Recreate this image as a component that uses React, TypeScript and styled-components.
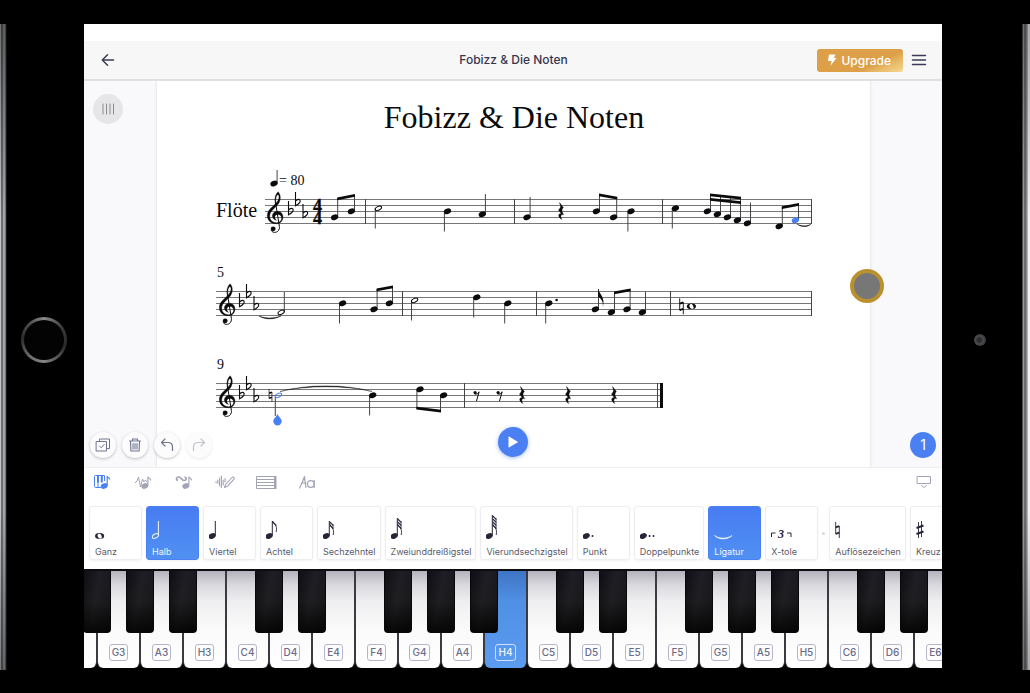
import React from 'react';
import styled, { createGlobalStyle, css } from 'styled-components';

const INK = '#0b0b0d';
const BLUE = '#4b80f3';
const SANS = "Inter, 'Liberation Sans', sans-serif";
const SERIF = "'Liberation Serif', 'Times New Roman', serif";

const GlobalStyle = createGlobalStyle`
  * { box-sizing: border-box; }
  html, body { margin: 0; padding: 0; background: #000; }
  body { font-family: ${SANS}; color: #3b3b55; }
  button { font-family: inherit; margin: 0; padding: 0; border: 0; background: none; color: inherit; cursor: pointer; }
  svg { display: block; }
`;

/* ---------- device frame ---------- */

const Device = styled.div`
  display: grid;
  grid-template-columns: 84px minmax(0, 1fr) 88px;
  min-height: 100vh;
  padding: 24px 0 23px;
  background: #000;
`;

const Bezel = styled.div<{ $side: 'left' | 'right' }>`
  display: flex;
  align-items: center;
  justify-content: center;
  background-repeat: no-repeat;
  ${(p) =>
    p.$side === 'left'
      ? css`
          padding: 0 0 14px 4px;
          background-image:
            linear-gradient(rgba(0, 0, 0, 0.45), rgba(0, 0, 0, 0) 30%, rgba(0, 0, 0, 0) 75%, rgba(0, 0, 0, 0.4)),
            linear-gradient(to right, #c4c7c8 0 1px, #6a6e71 1px 3px, #a3a7aa 3px 5px, #6f7276 5px 6px, #1c1d1f 6px 7px);
          background-size: 7px 100%;
          background-position: left top;
        `
      : css`
          padding: 0 12px 14px 0;
          background-image:
            linear-gradient(rgba(0, 0, 0, 0.3), rgba(0, 0, 0, 0) 30%, rgba(0, 0, 0, 0) 75%, rgba(0, 0, 0, 0.3)),
            linear-gradient(to right, #4a4a4e 0 1px, #9a9a9e 1px 2px, #6b6b6f 2px 4px, #85858a 4px 5px, #b5b5b9 5px 6px, #f0f0f2 6px 8px);
          background-size: 8px 100%;
          background-position: right top;
        `}
`;

const HomeButton = styled.button`
  width: 46px;
  height: 46px;
  flex: none;
  border-radius: 50%;
  border: 3px solid transparent;
  background:
    linear-gradient(#030303, #030303) padding-box,
    conic-gradient(#8a8a8a, #3a3a3a 15%, #2a2a2a 30%, #858585 50%, #6a6a6a 62%, #2c2c2c 76%, #4a4a4a 88%, #8a8a8a) border-box;
`;

const Camera = styled.div`
  width: 12px;
  height: 12px;
  border-radius: 50%;
  background: radial-gradient(circle at 45% 50%, #2c2c2e 0 20%, #4b4b4d 45%, #37373a 70%, #1a1a1c 100%);
`;

const Screen = styled.main`
  display: flex;
  flex-direction: column;
  min-width: 0;
  margin-bottom: 2px;
  overflow: hidden;
  background: #fff;
`;

/* ---------- header ---------- */

const Header = styled.header`
  display: grid;
  grid-template-columns: 1fr auto 1fr;
  align-items: center;
  height: 57px;
  padding: 17px 15px 0 16px;
  background: linear-gradient(#fff 0 17px, #f7f7f8 17px);
  border-bottom: 2px solid #e0e0e2;
`;

const HeaderTitle = styled.div`
  font-size: 12px;
  font-weight: 500;
  line-height: 16px;
  color: #36364f;
`;

const IconButton = styled.button`
  display: flex;
  width: 16px;
  height: 16px;
  color: #3b3b55;
`;

const HeaderActions = styled.div`
  display: flex;
  align-items: center;
  justify-content: flex-end;
  gap: 8px;
`;

const Upgrade = styled.button`
  display: flex;
  align-items: center;
  justify-content: center;
  gap: 4px;
  height: 23px;
  padding: 0 12px 0 10px;
  border-radius: 3px;
  background: linear-gradient(155deg, #dd9f48 0 66%, #e7b865 78%, #f5d892 100%);
  color: #fff;
  font-size: 12px;
  font-weight: 500;
`;

/* ---------- workspace ---------- */

const Workspace = styled.section`
  position: relative;
  flex: 1 0 auto;
  display: grid;
  grid-template-columns: 73px minmax(0, 1fr) 72px;
  background: #f9f9fb;
`;

const Gutter = styled.div`
  padding: 13px 9px;
`;

const GripButton = styled.button`
  display: flex;
  align-items: center;
  justify-content: center;
  width: 30px;
  height: 30px;
  border-radius: 50%;
  background: #e6e6e8;
  color: #8c8c90;
`;

const Sheet = styled.article`
  padding: 16px 58px 30px 59px;
  background: #fff;
  box-shadow: 0 0 3px rgba(60, 60, 90, 0.18);
  clip-path: inset(0 -4px);
`;

const SheetTitle = styled.h1`
  margin: 0 0 24px;
  font-family: ${SERIF};
  font-size: 32px;
  font-weight: 400;
  line-height: 40px;
  text-align: center;
  color: ${INK};
`;

const StaffSvg = styled.svg`
  width: 100%;
  height: auto;
  overflow: visible;
  font-family: ${SERIF};
  fill: ${INK};
`;

const FloatingBar = styled.div`
  position: absolute;
  left: 0;
  right: 0;
  bottom: 9px;
  display: grid;
  grid-template-columns: 1fr auto 1fr;
  align-items: end;
  padding: 0 6px;
`;

const RoundGroup = styled.div`
  display: flex;
  gap: 6px;
`;

const RoundButton = styled.button<{ $faded?: boolean }>`
  display: flex;
  align-items: center;
  justify-content: center;
  width: 26px;
  height: 26px;
  border-radius: 50%;
  background: #fcfcfd;
  color: ${(p) => (p.$faded ? '#c0c2ce' : '#6f7590')};
  box-shadow: 0 1px 3px rgba(40, 40, 70, ${(p) => (p.$faded ? 0.1 : 0.28)});
`;

const PlayButton = styled.button`
  display: flex;
  align-items: center;
  justify-content: center;
  width: 30px;
  height: 30px;
  margin-bottom: 1px;
  border-radius: 50%;
  background: ${BLUE};
  color: #fff;
  box-shadow: 0 1px 4px rgba(75, 128, 243, 0.5);
`;

const VoiceButton = styled.button`
  justify-self: end;
  width: 26px;
  height: 26px;
  border-radius: 50%;
  background: ${BLUE};
  color: #fff;
  font-size: 14px;
  line-height: 26px;
`;

const TouchPoint = styled.div`
  position: absolute;
  top: 188px;
  right: 58px;
  width: 34px;
  height: 34px;
  border-radius: 50%;
  border: 4px solid #b9922f;
  background: #777;
`;

/* ---------- tool panel ---------- */

const Panel = styled.section`
  display: flex;
  flex-direction: column;
  background: #fff;
  border-top: 1px solid #efeff1;
`;

const TabRow = styled.nav`
  display: flex;
  align-items: center;
  gap: 17px;
  height: 31px;
  padding: 0 6px 3px;
`;

const Tab = styled.button<{ $active?: boolean; $end?: boolean }>`
  display: flex;
  justify-content: center;
  width: 24px;
  height: 16px;
  margin-left: ${(p) => (p.$end ? 'auto' : '0')};
  color: ${(p) => (p.$active ? BLUE : '#a3a3b6')};
`;

const CardRow = styled.div`
  display: flex;
  align-items: center;
  gap: 4px;
  padding: 7px 0 9px 5px;
  overflow: hidden;
`;

const Card = styled.button<{ $active?: boolean }>`
  display: flex;
  flex: none;
  flex-direction: column;
  justify-content: flex-end;
  align-items: flex-start;
  gap: 4px;
  min-width: 53px;
  height: 54px;
  padding: 0 4px 1px 5px;
  border-radius: 3px;
  border: 1px solid ${(p) => (p.$active ? BLUE : '#ededf0')};
  background: ${(p) => (p.$active ? 'linear-gradient(#487cf3, #5090f2)' : '#fff')};
  color: ${(p) => (p.$active ? '#f2f6ff' : '#26263a')};
  box-shadow: 0 1px 2px rgba(50, 50, 80, 0.06);
`;

const CardLabel = styled.span<{ $active?: boolean }>`
  font-size: 9px;
  line-height: 12px;
  white-space: nowrap;
  color: ${(p) => (p.$active ? '#f2f6ff' : '#5a5a6b')};
`;

const Separator = styled.span`
  flex: none;
  width: 3px;
  height: 3px;
  border-radius: 50%;
  background: #d3dcdc;
`;

/* ---------- keyboard ---------- */

const Keyboard = styled.section`
  display: flex;
  height: 99px;
  border-top: 2px solid #0c0c12;
  overflow: hidden;
  background: #050507;
`;

const WhiteKey = styled.button<{ $down?: boolean; $partial?: boolean }>`
  position: relative;
  display: flex;
  flex: none;
  align-items: flex-end;
  justify-content: center;
  width: ${(p) => (p.$partial ? '13px' : '43px')};
  padding-bottom: 7px;
  border: solid #3a3a40;
  border-width: 0 1px 0 ${(p) => (p.$partial ? '0' : '1px')};
  border-radius: 0 0 6px ${(p) => (p.$partial ? '0' : '6px')};
  background: ${(p) =>
    p.$down
      ? 'linear-gradient(#3f74c4, #4f8fe4 30%, #5b9cf0)'
      : 'linear-gradient(#b3b1bb, #d9d8de 14%, #efeff1 32%, #fafafa 60%, #fff)'};
`;

const BlackKey = styled.span`
  position: absolute;
  z-index: 1;
  top: 0;
  right: -15px;
  width: 28px;
  height: 62px;
  border-radius: 0 0 4px 4px;
  border: solid #08080a;
  border-width: 0 1px 1px;
  background: linear-gradient(100deg, rgba(0, 0, 0, 0.5), transparent 45%, rgba(0, 0, 0, 0.3)), linear-gradient(#1f1d26, #1f1f22 50%, #070707);
`;

const KeyName = styled.span<{ $down?: boolean }>`
  min-width: 18px;
  height: 17px;
  padding: 0 2px;
  border: 1px solid ${(p) => (p.$down ? '#cfe0fb' : '#b4b6cb')};
  border-radius: 3px;
  font-size: 10px;
  font-weight: 500;
  line-height: 15px;
  text-align: center;
  color: ${(p) => (p.$down ? '#f4f8ff' : '#6a6c88')};
`;

/* ---------- notation glyphs ---------- */

type Pt = [number, number];

const Head = ({ x, y, c }: { x: number; y: number; c?: string }) => (
  <ellipse cx={x} cy={y} rx="3.8" ry="2.7" transform={`rotate(-24 ${x} ${y})`} fill={c} />
);

const HalfHead = ({ x, y, c = INK }: { x: number; y: number; c?: string }) => (
  <ellipse cx={x} cy={y} rx="3.4" ry="1.9" transform={`rotate(-26 ${x} ${y})`} fill="none" stroke={c} strokeWidth="1" />
);

const WholeHead = ({ x, y }: { x: number; y: number }) => (
  <path
    fillRule="evenodd"
    fill="currentColor"
    d={`M${x - 4.6} ${y}a4.6 2.9 0 1 0 9.2 0a4.6 2.9 0 1 0 -9.2 0zM${x - 2} ${y - 1}c.6 -1.7 2.6 -1.6 3.5 .1c.8 1.5 1 2.7 .4 3.200c-.9 .7 -2.600 .2 -3.400 -1c-.5 -.8 -.7 -1.700 -.5 -2.300z`}
  />
);

const Stem = ({ x, from, to, c = '#444' }: { x: number; from: number; to: number; c?: string }) => (
  <path d={`M${x} ${from}V${to}`} stroke={c} strokeWidth="1" />
);

/* A note with its stem; y counts pixels below the top line of the staff. */
const Note = ({ x, y, to, half, c }: { x: number; y: number; to: number; half?: boolean; c?: string }) => {
  const sx = to < y ? x + 3.1 : x - 3.1;
  return (
    <g>
      <Stem x={sx} from={y} to={to} />
      {half ? <HalfHead x={x} y={y} c={c} /> : <Head x={x} y={y} c={c} />}
    </g>
  );
};

const Beam = ({ a, b }: { a: Pt; b: Pt }) => (
  <path d={`M${a[0] - 0.5} ${a[1]}L${b[0] + 0.5} ${b[1]}v2.8L${a[0] - 0.5} ${a[1] + 2.8}z`} />
);

const Clef = ({ x }: { x: number }) => (
  <g transform={`translate(${x} 0)`}>
    <path d="M8.3 5C7.2 0 8.2 -5 11.2 -7.3C13 -5.2 13.7 -2.4 13.2 .6C12.4 5 9.4 7.4 6.8 9.8C4 12.4 2.6 14.8 2.7 17.6C2.9 21.4 6 23.8 9.8 23.7C12.8 23.5 14.7 21.6 14.6 19C14.4 16.6 12.6 15.2 10.6 15.4C8.6 15.6 7.6 17 7.8 18.6C8 19.8 8.6 20.6 9.6 21.4C7 20.8 5.2 19 5.3 16.8C5.5 14 7.8 12.2 10.4 12.2C13.8 12.2 16.2 15 16 18.4C15.8 22 13.2 24.6 9.4 24.7C4 24.8 .2 21.2 .3 16.4C.4 11.4 4.6 8.6 7.4 5.8C10.2 3 12.2 .6 12 -2.4C11.9 -3.8 11.3 -4.6 10.7 -4.3C8.8 -3 8.4 1 9.2 5z" stroke={INK} strokeWidth=".3" />
    <path d="M8.6 4L12.4 27.5C12.8 31 10.5 33.4 7.5 33.4C5.6 33.4 4.4 32.2 4.2 30.6" fill="none" stroke={INK} strokeWidth="1" />
    <circle cx="6.2" cy="29.8" r="2.4" />
  </g>
);

const Flat = ({ x, y }: { x: number; y: number }) => (
  <path
    d={`M${x} ${y - 10}V${y + 3.8}C${x + 2.6} ${y + 2.4} ${x + 4.9} ${y + 0.8} ${x + 4.7} ${y - 1.2}C${x + 4.4} ${y - 3.2} ${x + 1.8} ${y - 3} ${x} ${y - 0.9}`}
    fill="none"
    stroke={INK}
    strokeWidth="1.1"
  />
);

const KeySignature = ({ x }: { x: number }) => (
  <>
    <Flat x={x} y={12} />
    <Flat x={x + 7} y={3} />
    <Flat x={x + 14.5} y={15} />
  </>
);

const Natural = ({ x, y, s = 1 }: { x: number; y: number; s?: number }) => (
  <g transform={`translate(${x} ${y}) scale(${s})`} fill="none" stroke="currentColor">
    <path d="M-1.8 -8V4M1.8 -4V8" strokeWidth=".9" />
    <path d="M-1.8 -2.6L1.8 -3.8M-1.8 3.8L1.8 2.6" strokeWidth="1.9" />
  </g>
);

const QuarterRest = ({ x }: { x: number }) => (
  <path d={`M${x - 1.4} 3.6L${x + 2.4} 8.6C${x + 0.4} 10.8 ${x + 0.6} 12.6 ${x + 2.8} 15.8C${x + 0.2} 15 ${x - 1} 17 ${x + 0.8} 20.6C${x - 3} 18.4 ${x - 3.4} 14.4 ${x + 0.2} 14.6L${x - 2.6} 11C${x} 8.8 ${x} 6.8 ${x - 1.6} 4z`} stroke={INK} strokeWidth=".3" />
);

const EighthRest = ({ x }: { x: number }) => (
  <g>
    <circle cx={x - 1.4} cy="9.6" r="1.6" />
    <path d={`M${x - 2.4} 10.6C${x} 11.8 ${x + 1.6} 10.8 ${x + 2.6} 8.8L${x} 18`} fill="none" stroke={INK} strokeWidth="1" />
  </g>
);

const Flag = ({ x, y }: { x: number; y: number }) => (
  <path d={`M${x - 0.4} ${y}C${x + 0.8} ${y + 5} ${x + 7} ${y + 8} ${x + 4.4} ${y + 18}C${x + 5} ${y + 11} ${x + 1.4} ${y + 9} ${x - 0.4} ${y + 7.4}z`} fill="currentColor" />
);

const Bars = ({ at }: { at: number[] }) => (
  <>
    {at.map((x) => (
      <path key={x} d={`M${x} 0V25`} stroke="#444" strokeWidth="1" />
    ))}
  </>
);

const Staff = ({ label, start = 0, end = 596, children }: { label: string; start?: number; end?: number; children: React.ReactNode }) => (
  <StaffSvg viewBox="0 0 596 92" role="img" aria-label={label}>
    <g transform="translate(0 38)" color={INK}>
      {[0, 6, 12, 18, 24].map((y) => (
        <path key={y} d={`M${start} ${y + 0.5}H${end}`} stroke="#77777a" strokeWidth="1" />
      ))}
      {children}
    </g>
  </StaffSvg>
);

const SystemOne = () => (
  <Staff label="Flöte, Takte 1 bis 4" start={49}>
    <text x="0" y="18" fontSize="20">Flöte</text>
    <Note x={58} y={-15.5} to={-29} />
    <text x="63" y="-14" fontSize="14">= 80</text>
    <Clef x={51} />
    <KeySignature x={72.5} />
    <text x="97" y="12.5" fontSize="18" fontWeight="700" stroke={INK} strokeWidth=".4">4</text>
    <text x="97" y="24.5" fontSize="18" fontWeight="700" stroke={INK} strokeWidth=".4">4</text>
    <Note x={118.6} y={18.3} to={-1} />
    <Note x={135.4} y={12.3} to={-4} />
    <Beam a={[121.7, -1.5]} b={[138.5, -5]} />
    <Note x={162.4} y={9.3} to={29.5} half />
    <Note x={231.5} y={12.3} to={32.5} />
    <Note x={266.3} y={15.3} to={-5} />
    <Note x={311} y={18.3} to={-2} />
    <QuarterRest x={345} />
    <Note x={380.4} y={12.3} to={-5} />
    <Note x={397.6} y={18.3} to={-2} />
    <Beam a={[383.5, -5.5]} b={[400.7, -2.3]} />
    <Note x={415} y={12.3} to={32.5} />
    <Note x={459.4} y={9.3} to={29.5} />
    <Note x={491.4} y={12.3} to={-4} />
    <Note x={501.4} y={15.3} to={-3} />
    <Note x={511.4} y={18.3} to={-2} />
    <Note x={521.4} y={21.3} to={-1} />
    <Beam a={[494.5, -5.5]} b={[524.5, -2.3]} />
    <Beam a={[494.5, -1]} b={[524.5, 2.2]} />
    <Note x={531.4} y={24.3} to={3.5} />
    <Note x={563.2} y={27.3} to={8} />
    <Note x={579.4} y={21.3} to={5} c={BLUE} />
    <Beam a={[566.3, 7.2]} b={[582.5, 4]} />
    <path d="M581 25C585 28.4 592 28.4 595 25C592 27.4 585 27.4 581 25z" stroke={INK} strokeWidth=".4" />
    <Bars at={[149.5, 298.5, 446.5, 595.5]} />
  </Staff>
);

const SystemTwo = () => (
  <Staff label="Takte 5 bis 8">
    <text x="1" y="-14" fontSize="14">5</text>
    <Clef x={3} />
    <KeySignature x={23.5} />
    <path d="M43 25C49 28.8 58 28.8 65 25C58 27.6 49 27.6 43 25z" stroke={INK} strokeWidth=".4" />
    <Note x={65.2} y={21.3} to={1} half />
    <Note x={126.6} y={12.3} to={32.5} />
    <Note x={158} y={18.3} to={-2} />
    <Note x={173.4} y={12.3} to={-5} />
    <Beam a={[161.1, -2.5]} b={[176.5, -5.5]} />
    <Note x={198.6} y={9.3} to={29.5} half />
    <Note x={260.8} y={6.3} to={26.5} />
    <Note x={291.8} y={12.3} to={32.5} />
    <Note x={332.8} y={12.3} to={32.5} />
    <circle cx="340.6" cy="9" r="1.3" />
    <Note x={379.4} y={18.3} to={-2} />
    <Flag x={382.5} y={-2} />
    <Note x={395.4} y={21.3} to={1} />
    <Note x={411} y={18.3} to={-2} />
    <Beam a={[398.5, 0.5]} b={[414.1, -2.5]} />
    <Note x={426.4} y={21.3} to={0.5} />
    <Natural x={465.5} y={15.3} />
    <WholeHead x={475.4} y={15.3} />
    <Bars at={[186.5, 320.5, 454.5, 595.5]} />
  </Staff>
);

const SystemThree = () => (
  <Staff label="Takte 9 und 10" end={447}>
    <text x="1" y="-14" fontSize="14">9</text>
    <Clef x={3} />
    <KeySignature x={23.5} />
    <Natural x={54.5} y={12.3} s={0.8} />
    <Note x={62.4} y={12.3} to={33} half c={BLUE} />
    <path d="M61.5 31C63 34.5 65.7 35.5 65.7 38.2A4.2 4.2 0 0 1 57.3 38.2C57.3 35.5 60 34.5 61.5 31z" fill={BLUE} />
    <path d="M64 8.5C90 1 130 1 156 8.5C130 2.2 90 2.2 64 8.5z" stroke={INK} strokeWidth=".4" />
    <Note x={156.7} y={12.3} to={32.5} />
    <Note x={204} y={6.3} to={26} />
    <Note x={227.6} y={12.3} to={29} />
    <Beam a={[200.9, 23.8]} b={[224.5, 26.8]} />
    <EighthRest x={260.5} />
    <EighthRest x={283.5} />
    <QuarterRest x={306} />
    <QuarterRest x={352} />
    <QuarterRest x={398} />
    <Bars at={[248.5, 441.5]} />
    <rect x="444" y="0" width="3" height="25" />
  </Staff>
);

/* ---------- small icons ---------- */

const Line = styled.svg`
  fill: none;
  stroke: currentColor;
  stroke-linecap: round;
  stroke-linejoin: round;
`;

const CopyCheckIcon = () => (
  <Line width="16" height="16" viewBox="0 0 16 16" strokeWidth="1">
    <path d="M1.5 4.5h10v9.5h-10zM4.5 4.5v-2.500h10v9.500h-3M4.500 9l1.700 1.700 3-3.200" />
  </Line>
);
const TrashIcon = () => (
  <Line width="16" height="16" viewBox="0 0 16 16" strokeWidth="1.1">
    <path d="M2.500 4h11M5.500 4v-2h5v2M3.500 4l.4 10h8.200l.4-10M6 6.500v5.500M8 6.500v5.500M10 6.500v5.500" />
  </Line>
);
const UndoIcon = ({ flip }: { flip?: boolean }) => (
  <Line width="16" height="16" viewBox="0 0 16 16" strokeWidth="1.2">
    <path transform={flip ? 'translate(16 0) scale(-1 1)' : undefined} d="M6 2L2.500 5.500L6 9M2.500 5.500H9C12 5.500 13.500 7.500 13.500 10V13.500" />
  </Line>
);

const Piano = () => (
  <svg width="18" height="16" viewBox="0 0 18 16" fill="currentColor">
    <path d="M8 13.500H2.500Q1.500 13.500 1.500 12.500V2.500Q1.500 1.500 2.500 1.500H11.500V7M5 8V13.500" fill="none" stroke="currentColor" strokeWidth="1" />
    <path d="M4 1.500h2V8.500H4zM7.800 1.500h2V8.500H7.800z" />
    <ellipse cx="11.200" cy="12" rx="3.500" ry="2.700" transform="rotate(-22 11.200 12)" />
    <path d="M14.200 11.500V2C14.500 4 16.800 3.500 16.800 5.500" fill="none" stroke="currentColor" strokeWidth="1.200" />
  </svg>
);
const WaveNote = () => (
  <svg width="18" height="16" viewBox="0 0 18 16" fill="currentColor">
    <path d="M1 9L3 7L4.500 3L6.500 13L8.500 5L10 8L11.500 6L13 8" fill="none" stroke="currentColor" strokeWidth="1" />
    <ellipse cx="10.800" cy="12" rx="3.500" ry="2.700" transform="rotate(-22 10.800 12)" />
    <path d="M13.900 11.500V2.500C14.200 4.500 16.500 4 16.800 6.500" fill="none" stroke="currentColor" strokeWidth="1.100" />
  </svg>
);
const OrnamentNote = () => (
  <svg width="18" height="16" viewBox="0 0 18 16" fill="currentColor">
    <path d="M3 6.500C.5 5.500 1.500 2.800 4 3C6.500 3.300 6.500 6.500 9 6.500C11.500 6.500 12 3.500 9.500 3" fill="none" stroke="currentColor" strokeWidth="1.700" />
    <path d="M13.900 11.500V2.500C14.200 4.500 16.500 4 16.800 6.500" fill="none" stroke="currentColor" strokeWidth="1.100" />
    <ellipse cx="10.800" cy="12" rx="3.500" ry="2.700" transform="rotate(-22 10.800 12)" />
  </svg>
);
const WavePencil = () => (
  <Line width="20" height="16" viewBox="0 0 20 16" strokeWidth="1.100">
    <path d="M1 7.500V8.500M2.800 6V9.500M4.600 4V12M6.400 2V13.500M8.200 6V11M10 4.500V8" />
    <path d="M9.500 13.500L10.500 10.500L17 3.500Q18.200 2.500 19 3.500Q19.600 4.500 18.800 5.300L12.300 12.300z" />
  </Line>
);
const StaffIcon = () => (
  <svg width="21" height="16" viewBox="0 0 21 16" fill="currentColor">
    <path d="M.5 2.500H20M.5 5.500H18M.5 8.500H18M.5 11.500H18M.5 14.500H20M.5 2.500V14.500" fill="none" stroke="currentColor" strokeWidth="1" />
    <rect x="18" y="2" width="2.500" height="13" />
  </svg>
);
const LyricsIcon = () => (
  <Line width="18" height="16" viewBox="0 0 18 16" strokeWidth="1.200">
    <path d="M1.500 14Q4 10 6.500 2.500Q7 8 8 13.500M3.500 9H8" />
    <circle cx="12.800" cy="10" r="3.300" />
    <path d="M16.200 6.500V13.500" />
  </Line>
);
const CollapseIcon = () => (
  <Line width="16" height="16" viewBox="0 0 16 16" strokeWidth="1">
    <path d="M1.500 2.500H14.500V9.500H1.500zM5.500 11.500L8 13.500L10.500 11.500" />
  </Line>
);

/* Card drawings share one 32px high box with the note head near the bottom. */
const CardGlyph = ({ w = 24, children }: { w?: number; children: React.ReactNode }) => (
  <svg width={w} height="32" viewBox={`0 0 ${w} 32`} fill="currentColor" aria-hidden="true">
    {children}
  </svg>
);

const Flags = ({ count, top }: { count: number; top: number }) => (
  <>
    {Array.from({ length: count }, (_, i) => (
      <path key={i} d={`M6.600 ${top + i * 3}l3.800 3.800v1.400l-3.800 -3.400z`} />
    ))}
    <path d={`M6.600 ${top + (count - 1) * 3}c1 3 5.200 4 3.600 11`} fill="none" stroke="currentColor" strokeWidth=".9" />
    {count > 1 && <path d={`M10 ${top + 3}v${(count - 1) * 3 + 2}`} stroke="currentColor" strokeWidth=".8" />}
  </>
);

const CardNote = ({ top, flags = 0 }: { top: number; flags?: number }) => (
  <CardGlyph>
    <Head x={3.200} y={26} />
    <Stem x={6.300} from={25} to={top} c="currentColor" />
    {flags > 0 && <Flags count={flags} top={top} />}
  </CardGlyph>
);

interface Tool {
  label: string;
  glyph: React.ReactNode;
  active?: boolean;
}

const durationTools: Tool[] = [
  { label: 'Ganz', glyph: <CardGlyph><WholeHead x={4.6} y={26} /></CardGlyph> },
  {
    label: 'Halb',
    active: true,
    glyph: (
      <CardGlyph>
        <HalfHead x={3.4} y={26} c="currentColor" />
        <Stem x={6.4} from={25} to={11} c="currentColor" />
      </CardGlyph>
    ),
  },
  { label: 'Viertel', glyph: <CardNote top={11} /> },
  { label: 'Achtel', glyph: <CardNote top={11} flags={1} /> },
  { label: 'Sechzehntel', glyph: <CardNote top={11} flags={2} /> },
  { label: 'Zweiunddreißigstel', glyph: <CardNote top={8} flags={3} /> },
  { label: 'Vierundsechzigstel', glyph: <CardNote top={5} flags={4} /> },
  { label: 'Punkt', glyph: <CardGlyph><Head x={3.2} y={26} /><circle cx="9.500" cy="26" r="1" /></CardGlyph> },
  {
    label: 'Doppelpunkte',
    glyph: (
      <CardGlyph>
        <Head x={3.2} y={26} />
        <circle cx="9.500" cy="26" r="1" />
        <circle cx="13.500" cy="26" r="1" />
      </CardGlyph>
    ),
  },
  {
    label: 'Ligatur',
    active: true,
    glyph: (
      <CardGlyph>
        <path d="M.5 25.500C5 29 13.500 29 18 25.500C13.500 30 5 30 .5 25.500z" stroke="currentColor" strokeWidth=".7" />
      </CardGlyph>
    ),
  },
  {
    label: 'X-tole',
    glyph: (
      <CardGlyph>
        <path d="M.5 27V23H4.500M16 23H20V27" fill="none" stroke="currentColor" strokeWidth="1" />
        <text x="7" y="28" fontFamily={SERIF} fontSize="12" fontWeight="700" fontStyle="italic">3</text>
      </CardGlyph>
    ),
  },
];

const accidentalTools: Tool[] = [
  { label: 'Auflösezeichen', glyph: <CardGlyph><Natural x={2.500} y={20} /></CardGlyph> },
  {
    label: 'Kreuz',
    glyph: (
      <CardGlyph>
        <path d="M2.500 12V28M5.500 11V27" fill="none" stroke="currentColor" strokeWidth=".9" />
        <path d="M.5 18L7.500 15.500M.5 24L7.500 21.500" fill="none" stroke="currentColor" strokeWidth="2" />
      </CardGlyph>
    ),
  },
];

const ToolCard = ({ label, glyph, active }: Tool) => (
  <Card $active={active} aria-pressed={!!active}>
    {glyph}
    <CardLabel $active={active}>{label}</CardLabel>
  </Card>
);

const keyNames = ['G3', 'A3', 'H3', 'C4', 'D4', 'E4', 'F4', 'G4', 'A4', 'H4', 'C5', 'D5', 'E5', 'F5', 'G5', 'A5', 'H5', 'C6', 'D6', 'E6'];
const pressedKey = 'H4';
const hasSharp = (name: string) => !/^[HE]/.test(name);

export default function App() {
  return (
    <>
      <GlobalStyle />
      <Device>
        <Bezel $side="left">
          <HomeButton aria-label="Home" />
        </Bezel>
        <Screen>
          <Header>
            <IconButton aria-label="Zurück">
              <Line width="16" height="16" viewBox="0 0 16 16" strokeWidth="1.500">
                <path d="M13.500 8H2.500M7.500 2.800L2.300 8L7.500 13.200" />
              </Line>
            </IconButton>
            <HeaderTitle>Fobizz &amp; Die Noten</HeaderTitle>
            <HeaderActions>
              <Upgrade>
                <svg width="10" height="12" viewBox="0 0 10 12" fill="currentColor">
                  <path d="M2 .5H8.500L7 4H9.500L3.500 11.800L4.500 7H1z" />
                </svg>
                Upgrade
              </Upgrade>
              <IconButton aria-label="Menü">
                <Line width="16" height="16" viewBox="0 0 16 16" strokeWidth="1.500">
                  <path d="M1.500 3.500H14.500M1.500 8H14.500M1.500 12.500H14.500" />
                </Line>
              </IconButton>
            </HeaderActions>
          </Header>

          <Workspace>
            <Gutter>
              <GripButton aria-label="Leiste verschieben">
                <Line width="14" height="12" viewBox="0 0 14 12" strokeWidth="1">
                  <path d="M2 1V11M5.500 1V11M9 1V11M12.500 1V11" />
                </Line>
              </GripButton>
            </Gutter>
            <Sheet>
              <SheetTitle>Fobizz &amp; Die Noten</SheetTitle>
              <SystemOne />
              <SystemTwo />
              <SystemThree />
            </Sheet>
            <TouchPoint />
            <FloatingBar>
              <RoundGroup>
                <RoundButton aria-label="Auswählen"><CopyCheckIcon /></RoundButton>
                <RoundButton aria-label="Löschen"><TrashIcon /></RoundButton>
                <RoundButton aria-label="Rückgängig"><UndoIcon /></RoundButton>
                <RoundButton aria-label="Wiederholen" $faded><UndoIcon flip /></RoundButton>
              </RoundGroup>
              <PlayButton aria-label="Abspielen">
                <svg width="12" height="12" viewBox="0 0 12 12" fill="currentColor">
                  <path d="M1.500 1.200Q1.500 .3 2.400 .8L10.400 5.400Q11.300 6 10.400 6.600L2.400 11.200Q1.500 11.700 1.500 10.800z" />
                </svg>
              </PlayButton>
              <VoiceButton aria-label="Stimme 1">1</VoiceButton>
            </FloatingBar>
          </Workspace>

          <Panel>
            <TabRow>
              <Tab $active aria-label="Noten"><Piano /></Tab>
              <Tab aria-label="Dynamik"><WaveNote /></Tab>
              <Tab aria-label="Verzierungen"><OrnamentNote /></Tab>
              <Tab aria-label="Artikulation"><WavePencil /></Tab>
              <Tab aria-label="Takte"><StaffIcon /></Tab>
              <Tab aria-label="Text"><LyricsIcon /></Tab>
              <Tab $end aria-label="Einklappen"><CollapseIcon /></Tab>
            </TabRow>
            <CardRow>
              {durationTools.map((t) => <ToolCard key={t.label} {...t} />)}
              <Separator />
              {accidentalTools.map((t) => <ToolCard key={t.label} {...t} />)}
            </CardRow>
          </Panel>

          <Keyboard>
            <WhiteKey $partial aria-label="F3"><BlackKey /></WhiteKey>
            {keyNames.map((name) => (
              <WhiteKey key={name} $down={name === pressedKey}>
                {hasSharp(name) && <BlackKey />}
                <KeyName $down={name === pressedKey}>{name}</KeyName>
              </WhiteKey>
            ))}
          </Keyboard>
        </Screen>
        <Bezel $side="right">
          <Camera />
        </Bezel>
      </Device>
    </>
  );
}
